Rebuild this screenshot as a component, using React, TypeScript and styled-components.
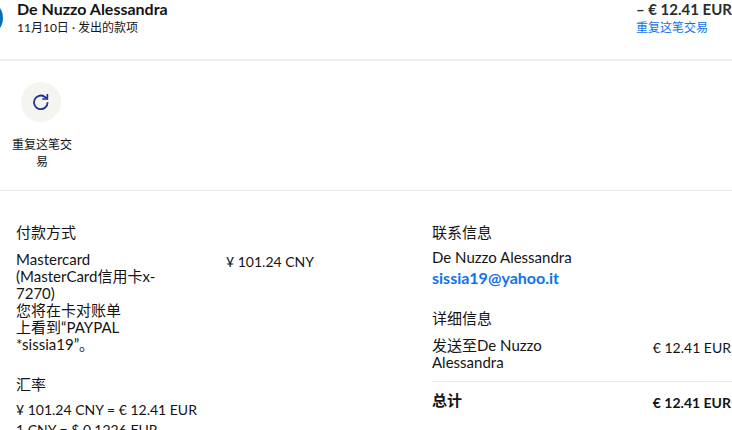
import React from 'react';
import styled, { createGlobalStyle } from 'styled-components';

const GlobalStyle = createGlobalStyle`
  *, *::before, *::after { box-sizing: border-box; }
  body {
    margin: 0;
    background: #fff;
    color: #141414;
    font-family: Lato, "Noto Sans CJK SC", sans-serif;
    font-size: 15px;
    line-height: 17px;
  }
  h2, p { margin: 0; font: inherit; }
`;

const Page = styled.main`
  height: 100vh;
  overflow: hidden;
`;

const Header = styled.header`
  display: flex;
  padding-bottom: 23px;
  border-bottom: 2px solid #f1f0ec;
`;

const Avatar = styled.div`
  flex: none;
  width: 36px;
  height: 36px;
  margin: 0 14px 0 -33px;
  border-radius: 50%;
  background: #0070ba;
`;

const HeaderText = styled.div`
  display: flex;
  flex-direction: column;
  align-items: flex-start;
  gap: 1px;
  white-space: nowrap;
`;

const Party = styled(HeaderText)`
  flex: 1;
`;

const Title = styled.strong`
  font-size: 16px;
  font-weight: 700;
  line-height: 18px;
`;

const HeaderAmount = styled(Title)`
  color: #2c2e2f;
  font-size: 15px;
`;

const Meta = styled.span`
  font-size: 12px;
`;

const RepeatLink = styled.a`
  color: #1072eb;
  font-size: 12px;
  text-decoration: none;
`;

const Actions = styled.section`
  padding: 21px 12px 20px;
  border-bottom: 1px solid #e9e9e7;
`;

const Action = styled.button`
  display: flex;
  flex-direction: column;
  align-items: center;
  gap: 14px;
  width: 60px;
  padding: 0;
  border: 0;
  background: none;
  color: #141414;
  font: inherit;
  font-size: 12px;
  line-height: 17px;
`;

const ActionIcon = styled.span`
  display: grid;
  place-items: center;
  width: 40px;
  height: 40px;
  margin-right: 2px;
  border-radius: 50%;
  background: #f5f4ef;
`;

const Details = styled.div`
  display: grid;
  grid-template-columns: 416fr 300fr;
  padding: 32px 0 0 16px;
`;

const Column = styled.div<{ $gap: number }>`
  display: flex;
  flex-direction: column;
  gap: ${(p) => p.$gap}px;
`;

const Heading = styled.h2<{ $space: number }>`
  margin-bottom: ${(p) => p.$space}px;
  line-height: 18px;
`;

const Row = styled.div`
  display: flex;
  justify-content: space-between;
  padding-right: 1px;
`;

const PaymentRow = styled(Row)`
  padding-right: 118px;
`;

const Description = styled.span`
  width: 152px;
`;

const Amount = styled.span`
  padding-top: 2px;
  font-size: 14px;
  white-space: nowrap;
`;

const Total = styled(Row)`
  margin-top: 10px;
  padding-top: 10px;
  border-top: 1px solid #ebebeb;
  font-weight: 700;
`;

const Email = styled.a`
  display: block;
  color: #1072eb;
  font-size: 16px;
  font-weight: 700;
  line-height: 24px;
  text-decoration: none;
`;

const Rate = styled.p`
  font-size: 14px;
  line-height: 20px;
`;

function RepeatIcon() {
  return (
    <svg width="18" height="18" viewBox="0 0 18 18" fill="none" stroke="#1b2f96" strokeWidth="1.8" aria-hidden="true">
      <path d="M15.6 9.2A6.8 6.8 0 1 1 12.6 3.7L14.8 5.4" />
      <path d="M15.4 1v5H10.2" strokeWidth="1.6" />
    </svg>
  );
}

export default function App() {
  return (
    <Page>
      <GlobalStyle />
      <Header>
        <Avatar />
        <Party>
          <Title>De Nuzzo Alessandra</Title>
          <Meta>11月10日 · 发出的款项</Meta>
        </Party>
        <HeaderText>
          <HeaderAmount>– € 12.41 EUR</HeaderAmount>
          <RepeatLink href="#repeat">重复这笔交易</RepeatLink>
        </HeaderText>
      </Header>
      <Actions>
        <Action type="button">
          <ActionIcon>
            <RepeatIcon />
          </ActionIcon>
          重复这笔交易
        </Action>
      </Actions>
      <Details>
        <Column $gap={22}>
          <section>
            <Heading $space={10}>付款方式</Heading>
            <PaymentRow>
              <Description>
                Mastercard<br />
                (MasterCard信用卡x-<br />
                7270)<br />
                您将在卡对账单<br />
                上看到“PAYPAL<br />
                *sissia19”。
              </Description>
              <Amount>¥ 101.24 CNY</Amount>
            </PaymentRow>
          </section>
          <section>
            <Heading $space={7}>汇率</Heading>
            <Rate>¥ 101.24 CNY = € 12.41 EUR</Rate>
            <Rate>1 CNY = $ 0.1226 EUR</Rate>
          </section>
        </Column>
        <Column $gap={19}>
          <section>
            <Heading $space={8}>联系信息</Heading>
            <p>De Nuzzo Alessandra</p>
            <Email href="mailto:sissia19@yahoo.it">sissia19@yahoo.it</Email>
          </section>
          <section>
            <Heading $space={10}>详细信息</Heading>
            <Row>
              <Description>
                发送至De Nuzzo<br />
                Alessandra
              </Description>
              <Amount>€ 12.41 EUR</Amount>
            </Row>
            <Total>
              <span>总计</span>
              <Amount>€ 12.41 EUR</Amount>
            </Total>
          </section>
        </Column>
      </Details>
    </Page>
  );
}
